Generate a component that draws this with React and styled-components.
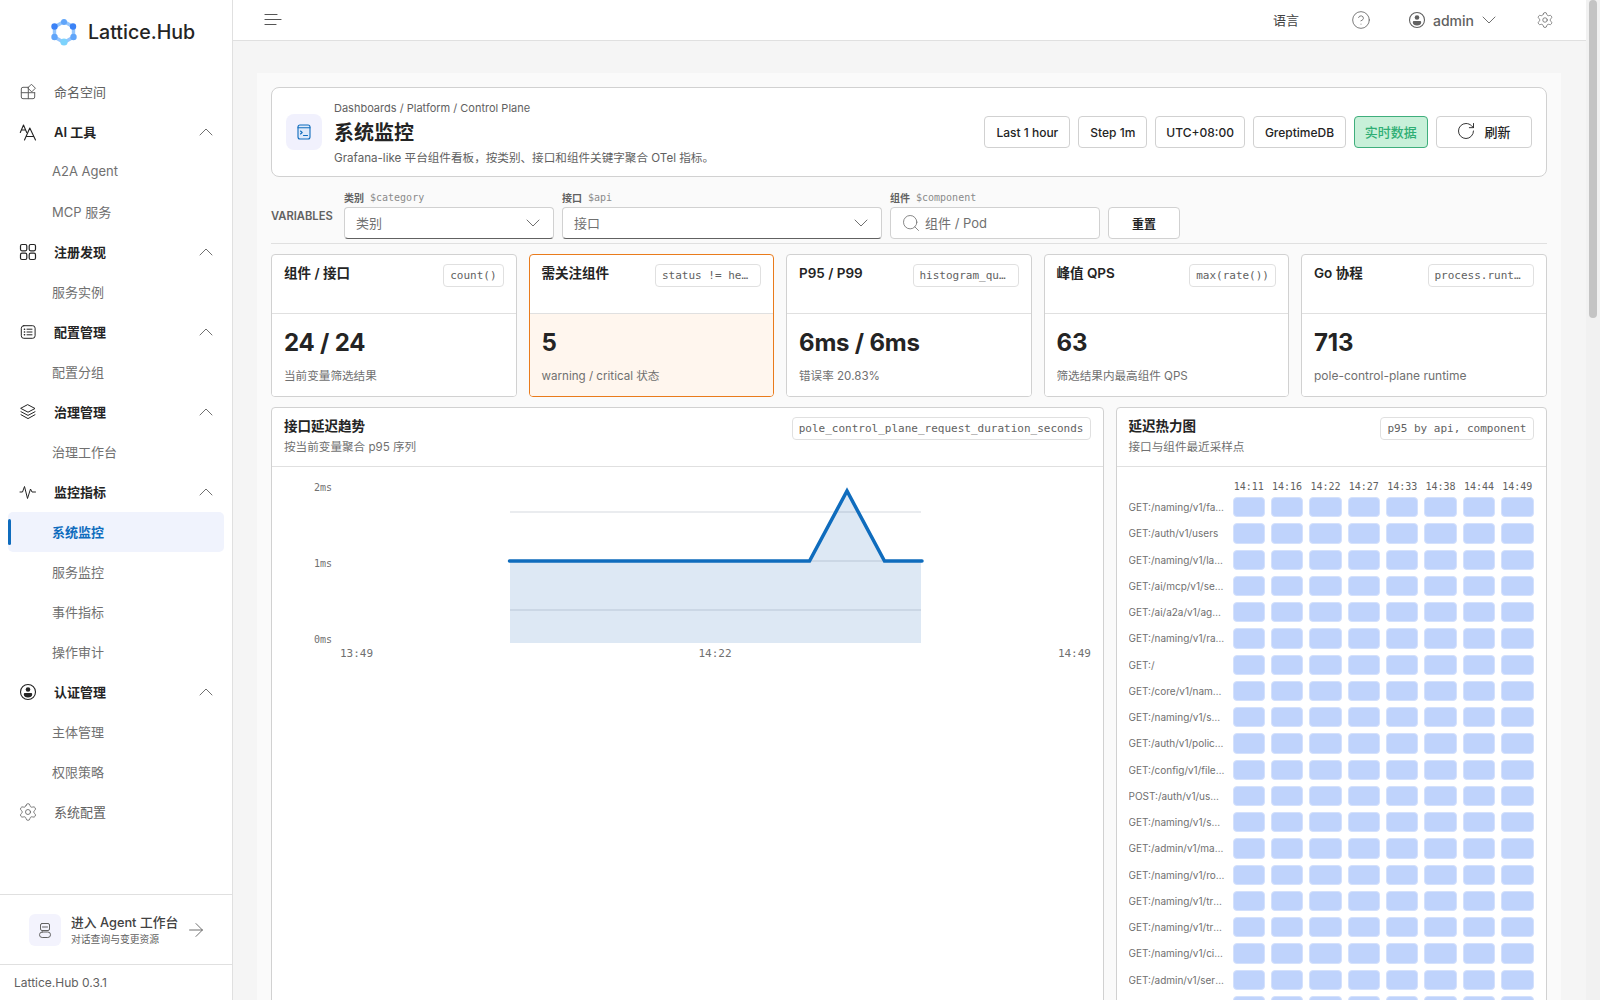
import React from 'react';
import styled, { createGlobalStyle } from 'styled-components';
import { ChevronUp, ChevronDown, Search, RotateCw, CircleHelp, ArrowRight, Settings } from 'lucide-react';

const GlobalStyle = createGlobalStyle`
    html, body {
        margin: 0;
        padding: 0;
        background: #f5f5f5;
    }
    html {
        scrollbar-width: none;
    }
    body {
        font-family: Inter, "Noto Sans CJK SC", sans-serif;
        color: #242424;
    }
    * {
        box-sizing: border-box;
    }
`

const mono = `"DejaVu Sans Mono", monospace`

const Shell = styled.div`
    display: flex;
    align-items: flex-start;
    padding-right: 14px;
`

const ScrollTrack = styled.div`
    position: fixed;
    top: 0;
    right: 0;
    bottom: 0;
    width: 14px;
    padding: 0 3px;
    background: #f1f1f1;
`

const ScrollThumb = styled.div`
    height: 318px;
    border-radius: 4px;
    background: #c4c4c4;
`

const Sidebar = styled.aside`
    position: sticky;
    top: 0;
    flex: 0 0 233px;
    width: 233px;
    min-width: 0;
    height: 100vh;
    display: flex;
    flex-direction: column;
    background: #fff;
    border-right: 1px solid #e0e0e0;
`

const Brand = styled.div`
    height: 72px;
    padding: 0 0 8px 50px;
    display: flex;
    align-items: center;
    gap: 10px;
    font-size: 19.6px;
    font-weight: 500;
    color: #242424;
`

const Nav = styled.nav`
    flex: 1;
    display: flex;
    flex-direction: column;
`

const NavRow = styled.div`
    height: 40px;
    margin: 0 8px;
    padding: 0 6px 0 10px;
    display: flex;
    align-items: center;
    gap: 16px;
    font-size: 13px;
    font-weight: ${(props) => (props.$group ? 600 : 400)};
    color: ${(props) => (props.$group ? '#242424' : '#616161')};
    svg {
        flex: none;
    }
`

const NavText = styled.span`
    flex: 1;
    padding-bottom: 2px;
`

const SubRow = styled.div`
    position: relative;
    height: 40px;
    margin: 0 8px;
    padding: 0 0 2px 44px;
    display: flex;
    align-items: center;
    font-size: 13px;
    border-radius: 5px;
    font-weight: ${(props) => (props.$active ? 600 : 400)};
    color: ${(props) => (props.$active ? '#0f6cbd' : '#707070')};
    background: ${(props) => (props.$active ? '#f0f3fd' : 'transparent')};
    &::before {
        content: '';
        display: ${(props) => (props.$active ? 'block' : 'none')};
        position: absolute;
        left: 0;
        top: 7px;
        bottom: 7px;
        width: 3px;
        border-radius: 2px;
        background: #0f6cbd;
    }
`

const AgentLink = styled.div`
    height: 70px;
    padding: 0 25px 0 29px;
    display: flex;
    align-items: center;
    gap: 10px;
    border-top: 1px solid #e0e0e0;
    color: #616161;
`

const AgentTile = styled.div`
    width: 32px;
    height: 32px;
    flex: none;
    display: flex;
    align-items: center;
    justify-content: center;
    border-radius: 6px;
    background: #f3f3fd;
`

const AgentText = styled.div`
    flex: 1;
    min-width: 0;
    padding-top: 2px;
    display: flex;
    flex-direction: column;
    white-space: nowrap;
`

const AgentTitle = styled.span`
    font-size: 12.8px;
    font-weight: 500;
    line-height: 18px;
    color: #424242;
`

const AgentSub = styled.span`
    font-size: 9.8px;
    line-height: 15px;
    color: #616161;
`

const Version = styled.div`
    height: 36px;
    padding: 0 14px;
    display: flex;
    align-items: center;
    font-size: 12px;
    color: #616161;
    border-top: 1px solid #e0e0e0;
`

const Body = styled.div`
    flex: 1;
    min-width: 0;
`

const TopBar = styled.header`
    height: 41px;
    padding: 0 32px 0 29px;
    display: flex;
    align-items: center;
    background: #fff;
    border-bottom: 1px solid #e0e0e0;
    color: #616161;
`

const TopSpacer = styled.div`
    flex: 1;
`

const TopLabel = styled.span`
    padding-bottom: 2px;
    font-size: 13px;
    color: #424242;
    margin-right: 52px;
`

const UserBox = styled.div`
    display: flex;
    align-items: center;
    margin: 0 35px 0 36px;
    font-size: 14px;
    font-weight: 500;
    color: #616161;
    span {
        margin: 0 3px 0 6px;
    }
`

const Main = styled.main`
    padding: 32px 25px 32px 24px;
`

const Board = styled.div`
    padding: 14px 14.500px 14px 14px;
    background: #fafafa;
`

const Head = styled.section`
    height: 90px;
    padding: 0 14px;
    display: flex;
    align-items: center;
    background: #fff;
    border: 1px solid #d1d1d1;
    border-radius: 8px;
`

const HeadTile = styled.div`
    width: 36px;
    height: 36px;
    flex: none;
    margin-right: 12px;
    display: flex;
    align-items: center;
    justify-content: center;
    border-radius: 8px;
    background: #f1f1fd;
`

const HeadText = styled.div`
    flex: 1;
    padding-top: 3px;
    display: flex;
    flex-direction: column;
`

const Crumb = styled.span`
    font-size: 11px;
    line-height: 16px;
    color: #616161;
`

const Title = styled.h1`
    margin: 3px 0 2px;
    font-size: 20px;
    line-height: 28px;
    font-weight: 700;
    color: #242424;
`

const HeadSub = styled.span`
    font-size: 11.6px;
    line-height: 18px;
    color: #616161;
`

const HeadActions = styled.div`
    display: flex;
    align-items: center;
    gap: 8px;
`

const Chip = styled.div`
    height: 32px;
    padding: 0 ${(props) => (props.$live ? '9.700px 2px' : props.$tight ? '10px' : '11px')};
    display: flex;
    align-items: center;
    gap: 8px;
    font-size: ${(props) => (props.$live ? '13px' : '12px')};
    font-weight: 500;
    border-radius: 4px;
    border: 1px solid ${(props) => (props.$live ? '#3fae7c' : '#d1d1d1')};
    background: ${(props) => (props.$live ? '#c8f0d9' : '#fff')};
    color: ${(props) => (props.$live ? '#2fae74' : '#242424')};
`

const RefreshChip = styled(Chip)`
    width: 96px;
    padding-bottom: 2px;
    justify-content: center;
    font-size: 13px;
`

const Variables = styled.section`
    margin-top: 12px;
    padding-bottom: 4px;
    display: flex;
    align-items: flex-end;
    gap: 8px;
    border-bottom: 1px solid #e0e0e0;
`

const VarLabel = styled.span`
    width: 65px;
    margin-bottom: 15px;
    font-size: 11.2px;
    line-height: 16px;
    font-weight: 600;
    color: #616161;
`

const Field = styled.div`
    width: ${(props) => props.$width}px;
    display: flex;
    flex-direction: column;
`

const FieldLabel = styled.div`
    height: 16px;
    margin-bottom: 2px;
    display: flex;
    align-items: center;
    gap: 6px;
    font-size: 10px;
    font-weight: 600;
    color: #616161;
    code {
        font-family: ${mono};
        font-size: 10px;
        font-weight: 400;
        color: #8a8a8a;
    }
`

const Select = styled.div`
    height: 32px;
    padding: 0 8px 2px 11px;
    display: flex;
    align-items: center;
    justify-content: space-between;
    font-size: 13px;
    color: #707070;
    background: #fff;
    border: 1px solid #d1d1d1;
    border-bottom-color: #616161;
    border-radius: 4px;
    svg {
        margin-top: 2px;
    }
`

const SearchBox = styled(Select)`
    justify-content: flex-start;
    gap: 4px;
    border-bottom-color: #d1d1d1;
    padding-left: 10px;
`

const ResetButton = styled(Chip)`
    width: 72px;
    justify-content: center;
    font-weight: 600;
`

const Stats = styled.section`
    margin-top: 10px;
    display: grid;
    grid-template-columns: repeat(5, minmax(0, 1fr));
    gap: 12px;
`

const StatCard = styled.article`
    height: 143px;
    display: flex;
    flex-direction: column;
    background: #fff;
    border-radius: 4px;
    border: 1px solid ${(props) => (props.$warn ? '#e97b1c' : '#d1d1d1')};
    overflow: hidden;
`

const StatHead = styled.div`
    height: 59px;
    padding: 9px 12px 0;
    display: flex;
    align-items: flex-start;
    justify-content: space-between;
    gap: 12px;
    border-bottom: 1px solid #e0e0e0;
`

const CardTitle = styled.span`
    font-size: 13.5px;
    line-height: 18px;
    font-weight: 600;
    white-space: nowrap;
    color: #242424;
`

const Tag = styled.code`
    flex: 0 1 auto;
    min-width: 0;
    height: 23px;
    padding: 0 6px;
    line-height: 21px;
    font-family: ${mono};
    font-size: 11px;
    color: #616161;
    background: #fff;
    border: 1px solid #e0e0e0;
    border-radius: 4px;
    white-space: nowrap;
    overflow: hidden;
    text-overflow: ellipsis;
    max-width: ${(props) => props.$max || 'none'};
`

const StatBody = styled.div`
    flex: 1;
    padding: 12px 12px 0;
    background: ${(props) => (props.$warn ? '#fff6ee' : '#fff')};
`

const StatValue = styled.div`
    font-size: 24px;
    line-height: 34px;
    font-weight: 700;
    letter-spacing: -0.2px;
    color: #242424;
`

const StatNote = styled.div`
    margin-top: 7px;
    font-size: ${(props) => (props.$latin ? '12px' : '11.6px')};
    line-height: 18px;
    color: #707070;
`

const Panels = styled.section`
    margin-top: 10px;
    display: grid;
    grid-template-columns: minmax(0, 1fr) 431px;
    gap: 12px;
    align-items: start;
`

const Panel = styled.article`
    height: ${(props) => props.$height}px;
    background: #fff;
    border: 1px solid #d1d1d1;
    border-radius: 4px;
    overflow: hidden;
`

const PanelHead = styled.div`
    height: 59px;
    padding: 9px 12px 0;
    display: flex;
    align-items: flex-start;
    justify-content: space-between;
    border-bottom: 1px solid #e0e0e0;
`

const PanelTitles = styled.div`
    display: flex;
    flex-direction: column;
`

const PanelSub = styled.span`
    font-size: 11.6px;
    line-height: 24px;
    color: #707070;
`

const ChartSvg = styled.svg`
    display: block;
    width: 830px;
    height: 210px;
    text {
        font-family: ${mono};
        fill: #707070;
    }
`

const Heat = styled.div`
    padding: 7.500px 12px 0;
    display: grid;
    grid-template-columns: 98px repeat(8, minmax(0, 1fr));
    grid-template-rows: 16.5px;
    grid-auto-rows: 20.25px;
    gap: 6px;
`

const HeatTime = styled.span`
    text-align: center;
    font-family: ${mono};
    font-size: 10px;
    line-height: 24px;
    color: #616161;
`

const HeatLabel = styled.span`
    padding-right: 2px;
    font-size: 10px;
    line-height: 20px;
    color: #707070;
    white-space: nowrap;
    overflow: hidden;
    text-overflow: ellipsis;
`

const HeatCell = styled.div`
    background: #bfd3fc;
    border: 1px solid #d4e1fc;
    border-radius: 4px;
`

const LatticeLogo = () => (
    <svg width="28" height="28" viewBox="0 0 28 28">
        <path d="M14 3.5 23.5 9v10L14 24.5 4.5 19V9Z" fill="none" stroke="#93c5fd" strokeWidth="3.4" strokeLinejoin="round" />
        <circle cx="14" cy="4" r="3" fill="#60a5fa" />
        <circle cx="23" cy="8.5" r="3.2" fill="#3b82f6" />
        <circle cx="23.5" cy="19" r="3.2" fill="#60a5fa" />
        <circle cx="14" cy="24" r="3.6" fill="#7dd3fc" />
        <circle cx="4.5" cy="19" r="3.2" fill="#60a5fa" />
        <circle cx="4.5" cy="8.5" r="3.2" fill="#3b82f6" />
    </svg>
)

const Glyph = ({ children, size = 20, color = 'currentColor', weight = 1 }) => (
    <svg width={size} height={size} viewBox="0 0 20 20" fill="none" stroke={color} strokeWidth={weight} strokeLinecap="round" strokeLinejoin="round">
        {children}
    </svg>
)

const SpacesIcon = () => (
    <Glyph color="#616161">
        <path d="M10.3 5.300H5a1.700 1.700 0 0 0-1.700 1.700v8A1.700 1.700 0 0 0 5 16.700h10a1.700 1.700 0 0 0 1.700-1.700v-4.300" />
        <path d="M3.300 10.700h13.400M10.300 5.300v11.400" />
        <path d="m13.700 2.500 3.700 3.700-3.700 3.700L10 6.200z" />
    </Glyph>
)

const TranslateIcon = () => (
    <Glyph color="#242424" weight={1.100}>
        <path d="M2.300 10.500 5.500 3l3.200 7.500M3.400 8h4.200" />
        <path d="M6.500 18 11.800 6l5.700 12M8 14.500h7.500" />
    </Glyph>
)

const AppsIcon = () => (
    <Glyph color="#242424" weight={1.200}>
        <rect x="2.500" y="2.500" width="6.300" height="6.300" rx="1.500" />
        <rect x="11.200" y="2.500" width="6.300" height="6.300" rx="1.500" />
        <rect x="2.500" y="11.200" width="6.300" height="6.300" rx="1.500" />
        <rect x="11.200" y="11.200" width="6.300" height="6.300" rx="1.500" />
    </Glyph>
)

const ListIcon = () => (
    <Glyph color="#242424">
        <rect x="3.300" y="3.700" width="13.800" height="12.600" rx="2.500" />
        <path d="M9 7.200h5M9 10h5M9 12.800h5" />
        <path d="M6.400 7.200h.2M6.400 10h.2M6.400 12.800h.2" strokeWidth="1.500" />
    </Glyph>
)

const LayersIcon = () => (
    <Glyph color="#242424">
        <path d="m10 2.800 7 3.700-7 3.700-7-3.700z" />
        <path d="m3 9.700 7 3.700 7-3.700" />
        <path d="m3 12.700 7 3.900 7-3.900" />
    </Glyph>
)

const PulseIcon = () => (
    <Glyph color="#242424">
        <path d="M2 10h2.500l2-5.500 3 12 3-9.500 1.500 3h3.500" />
    </Glyph>
)

const PersonIcon = ({ size = 20, color = '#242424' }) => (
    <svg width={size} height={size} viewBox="0 0 20 20">
        <circle cx="10" cy="10" r="7.500" fill="none" stroke={color} strokeWidth="1.100" />
        <circle cx="10" cy="7.500" r="2.300" fill={color} />
        <path d="M5.800 12.400c0-.8.600-1.300 1.300-1.300h5.800c.7 0 1.300.5 1.300 1.300 0 1.800-1.800 3.100-4.200 3.100s-4.200-1.300-4.200-3.100Z" fill={color} />
    </svg>
)

const BotIcon = () => (
    <Glyph size={20} color="#616161">
        <rect x="5.500" y="3.500" width="9" height="7" rx="1.500" />
        <path d="M7.500 7h5" />
        <rect x="4.500" y="12" width="11" height="5.500" rx="2.700" />
    </Glyph>
)

const ConsoleIcon = () => (
    <svg width="20" height="20" viewBox="0 0 20 20" fill="none" stroke="#0f6cbd" strokeWidth="1.100" strokeLinecap="round" strokeLinejoin="round">
        <rect x="4" y="3" width="12" height="14" rx="2" fill="#dfeafb" />
        <path d="M4 5.800h12" />
        <path d="m6.500 9 1.700 1.500-1.700 1.500M9.500 13.500h4" />
    </svg>
)

const HamburgerIcon = () => (
    <svg width="20" height="20" viewBox="0 0 20 20" fill="none" stroke="#555" strokeWidth="1.200" strokeLinecap="round">
        <path d="M3 4.500h12M3 9.500h16M3 14.500h11" />
    </svg>
)

const navItems = [
    { label: '命名空间', icon: <SpacesIcon />, plain: true },
    { label: 'AI 工具', icon: <TranslateIcon />, children: ['A2A Agent', 'MCP 服务'] },
    { label: '注册发现', icon: <AppsIcon />, children: ['服务实例'] },
    { label: '配置管理', icon: <ListIcon />, children: ['配置分组'] },
    { label: '治理管理', icon: <LayersIcon />, children: ['治理工作台'] },
    { label: '监控指标', icon: <PulseIcon />, children: ['系统监控', '服务监控', '事件指标', '操作审计'] },
    { label: '认证管理', icon: <PersonIcon />, children: ['主体管理', '权限策略'] },
    { label: '系统配置', icon: <Settings size={20} strokeWidth={1} color="#616161" />, plain: true },
]

const stats = [
    { title: '组件 / 接口', tag: 'count()', value: '24 / 24', note: '当前变量筛选结果' },
    { title: '需关注组件', tag: 'status != healthy', value: '5', note: 'warning / critical 状态', warn: true, max: '106px' },
    { title: 'P95 / P99', tag: 'histogram_quantile', value: '6ms / 6ms', note: '错误率 20.83%', max: '106px' },
    { title: '峰值 QPS', tag: 'max(rate())', value: '63', note: '筛选结果内最高组件 QPS' },
    { title: 'Go 协程', tag: 'process.runtime.go', value: '713', note: 'pole-control-plane runtime', max: '106px', latin: true },
]

const heatTimes = ['14:11', '14:16', '14:22', '14:27', '14:33', '14:38', '14:44', '14:49']

const heatRows = [
    'GET:/naming/v1/fallback/status',
    'GET:/auth/v1/users',
    'GET:/naming/v1/lanes/list',
    'GET:/ai/mcp/v1/servers/list',
    'GET:/ai/a2a/v1/agents/list',
    'GET:/naming/v1/ratelimit/rules',
    'GET:/',
    'GET:/core/v1/namespaces/list',
    'GET:/naming/v1/swagger/list',
    'GET:/auth/v1/policies/list',
    'GET:/config/v1/files/list',
    'POST:/auth/v1/users/login',
    'GET:/naming/v1/smart/list',
    'GET:/admin/v1/maintain/status',
    'GET:/naming/v1/routings/list',
    'GET:/naming/v1/traffic/rules',
    'GET:/naming/v1/traffic/tags',
    'GET:/naming/v1/circuit/rules',
    'GET:/admin/v1/server/functions',
    'GET:/naming/v1/contracts/list',
]

const LatencyChart = () => (
    <ChartSvg viewBox="0 0 830 210">
        <path d="M238 94H537.500L575 24l37.500 70H649V176H238Z" fill="#dde8f4" />
        <path d="M238 45H649M238 94H649M238 143H649" stroke="#46586f" strokeOpacity="0.15" strokeWidth="1.500" />
        <path d="M237.500 94H537.500L575 24l37.500 70H650" fill="none" stroke="#0f6cbd" strokeWidth="3.500" strokeLinecap="round" strokeLinejoin="miter" />
        <text x="60" y="24" fontSize="10" textAnchor="end">2ms</text>
        <text x="60" y="100" fontSize="10" textAnchor="end">1ms</text>
        <text x="60" y="176" fontSize="10" textAnchor="end">0ms</text>
        <text x="68" y="190" fontSize="11">13:49</text>
        <text x="443" y="190" fontSize="11" textAnchor="middle">14:22</text>
        <text x="819" y="190" fontSize="11" textAnchor="end">14:49</text>
    </ChartSvg>
)

const App = () => (
    <>
        <GlobalStyle />
        <Shell>
            <Sidebar>
                <Brand>
                    <LatticeLogo />
                    Lattice.Hub
                </Brand>
                <Nav>
                    {navItems.map((item) => (
                        <React.Fragment key={item.label}>
                            <NavRow $group={!item.plain}>
                                {item.icon}
                                <NavText>{item.label}</NavText>
                                {!item.plain && <ChevronUp size={24} strokeWidth={1} color="#707070" />}
                            </NavRow>
                            {item.children && item.children.map((child) => (
                                <SubRow key={child} $active={child === '系统监控'}>{child}</SubRow>
                            ))}
                        </React.Fragment>
                    ))}
                </Nav>
                <AgentLink>
                    <AgentTile><BotIcon /></AgentTile>
                    <AgentText>
                        <AgentTitle>进入 Agent 工作台</AgentTitle>
                        <AgentSub>对话查询与变更资源</AgentSub>
                    </AgentText>
                    <ArrowRight size={22} strokeWidth={1} color="#616161" />
                </AgentLink>
                <Version>Lattice.Hub 0.3.1</Version>
            </Sidebar>
            <Body>
                <TopBar>
                    <HamburgerIcon />
                    <TopSpacer />
                    <TopLabel>语言</TopLabel>
                    <CircleHelp size={20} strokeWidth={1} color="#616161" />
                    <UserBox>
                        <PersonIcon size={20} color="#616161" />
                        <span>admin</span>
                        <ChevronDown size={24} strokeWidth={1} color="#707070" />
                    </UserBox>
                    <Settings size={18} strokeWidth={1} color="#616161" />
                </TopBar>
                <Main>
                    <Board>
                        <Head>
                            <HeadTile><ConsoleIcon /></HeadTile>
                            <HeadText>
                                <Crumb>Dashboards / Platform / Control Plane</Crumb>
                                <Title>系统监控</Title>
                                <HeadSub>Grafana-like 平台组件看板，按类别、接口和组件关键字聚合 OTel 指标。</HeadSub>
                            </HeadText>
                            <HeadActions>
                                <Chip>Last 1 hour</Chip>
                                <Chip>Step 1m</Chip>
                                <Chip $tight>UTC+08:00</Chip>
                                <Chip>GreptimeDB</Chip>
                                <Chip $live>实时数据</Chip>
                                <RefreshChip><RotateCw size={20} strokeWidth={1.100} />刷新</RefreshChip>
                            </HeadActions>
                        </Head>
                        <Variables>
                            <VarLabel>VARIABLES</VarLabel>
                            <Field $width={210}>
                                <FieldLabel>类别 <code>$category</code></FieldLabel>
                                <Select>类别<ChevronDown size={24} strokeWidth={1} /></Select>
                            </Field>
                            <Field $width={320}>
                                <FieldLabel>接口 <code>$api</code></FieldLabel>
                                <Select>接口<ChevronDown size={24} strokeWidth={1} /></Select>
                            </Field>
                            <Field $width={210}>
                                <FieldLabel>组件 <code>$component</code></FieldLabel>
                                <SearchBox><Search size={20} strokeWidth={1} />组件 / Pod</SearchBox>
                            </Field>
                            <ResetButton>重置</ResetButton>
                        </Variables>
                        <Stats>
                            {stats.map((stat) => (
                                <StatCard key={stat.title} $warn={stat.warn}>
                                    <StatHead>
                                        <CardTitle>{stat.title}</CardTitle>
                                        <Tag $max={stat.max}>{stat.tag}</Tag>
                                    </StatHead>
                                    <StatBody $warn={stat.warn}>
                                        <StatValue>{stat.value}</StatValue>
                                        <StatNote $latin={stat.latin}>{stat.note}</StatNote>
                                    </StatBody>
                                </StatCard>
                            ))}
                        </Stats>
                        <Panels>
                            <Panel $height={1400}>
                                <PanelHead>
                                    <PanelTitles>
                                        <CardTitle>接口延迟趋势</CardTitle>
                                        <PanelSub>按当前变量聚合 p95 序列</PanelSub>
                                    </PanelTitles>
                                    <Tag>pole_control_plane_request_duration_seconds</Tag>
                                </PanelHead>
                                <LatencyChart />
                            </Panel>
                            <Panel $height={1400}>
                                <PanelHead>
                                    <PanelTitles>
                                        <CardTitle>延迟热力图</CardTitle>
                                        <PanelSub>接口与组件最近采样点</PanelSub>
                                    </PanelTitles>
                                    <Tag>p95 by api, component</Tag>
                                </PanelHead>
                                <Heat>
                                    <span />
                                    {heatTimes.map((time) => <HeatTime key={time}>{time}</HeatTime>)}
                                    {heatRows.map((row, index) => (
                                        <React.Fragment key={row + index}>
                                            <HeatLabel>{row}</HeatLabel>
                                            {heatTimes.map((time) => <HeatCell key={time} />)}
                                        </React.Fragment>
                                    ))}
                                </Heat>
                            </Panel>
                        </Panels>
                    </Board>
                </Main>
            </Body>
        </Shell>
        <ScrollTrack><ScrollThumb /></ScrollTrack>
    </>
);

export default App;
